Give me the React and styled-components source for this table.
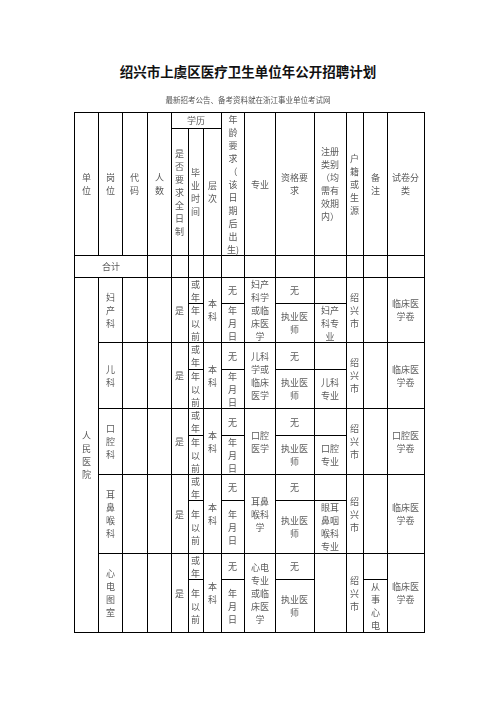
import React from "react";
import styled, { createGlobalStyle } from "styled-components";

const Global = createGlobalStyle`
  html, body { margin: 0; padding: 0; background: #fff; }
  body { font-family: "Liberation Serif", "Noto Sans CJK SC", serif; }
`;

const Page = styled.div`
  width: 496px;
  height: 702px;
  background: #fff;
  padding-top: 63px;
  box-sizing: border-box;
  overflow: hidden;
`;

const Title = styled.h1`
  margin: 0;
  text-align: center;
  font-family: "Noto Sans CJK SC", sans-serif;
  font-weight: 700;
  font-size: 13.5px;
  line-height: 16px;
  color: #111;
`;

const Subtitle = styled.div`
  margin-top: 16px;
  text-align: center;
  font-family: "Noto Sans CJK SC", sans-serif;
  font-size: 7.5px;
  line-height: 10px;
  color: #555;
  will-change: transform;
`;

const Sheet = styled.div`
  margin: 7px 0 0 74px;
  display: grid;
  grid-template-columns: 24px 24px 25px 24px 17px 15px 18px 23px 31px 39px 32px 17px 24px 37px;
  grid-template-rows: 16px 127px 22px 26px 39px 27px 39px 27px 39px 26px 53px 26px 53px;
  width: max-content;
  border-top: 1px solid #000;
  border-left: 1px solid #000;
`;

const Cell = styled.div`
  grid-column: ${(p) => p.$c} / span ${(p) => p.$cs || 1};
  grid-row: ${(p) => p.$r} / span ${(p) => p.$rs || 1};
  border-right: 1px solid #000;
  border-bottom: 1px solid #000;
  box-sizing: border-box;
  display: flex;
  align-items: center;
  justify-content: center;
  text-align: center;
  font-family: "Noto Sans CJK SC", sans-serif;
  font-size: 9px;
  line-height: 13px;
  color: #5a5a5a;
  white-space: nowrap;
  overflow: hidden;
`;

const Text = styled.span`
  display: block;
  will-change: transform;
`;

const Lines = ({ t }) => {
  if (!t) return null;
  const parts = t.split("|");
  return (
    <Text>
      {parts.map((p, i) => (
        <React.Fragment key={i}>
          {i > 0 && <br />}
          {p}
        </React.Fragment>
      ))}
    </Text>
  );
};

const C = ({ c, cs, r, rs, t }) => (
  <Cell $c={c} $cs={cs} $r={r} $rs={rs}>
    <Lines t={t} />
  </Cell>
);

const depts = [
  { post: "妇|产|科", major: "妇产|科学|或临|床医|学", reg: "妇产|科专|业", exam: "临床医|学卷" },
  { post: "儿|科", major: "儿科|学或|临床|医学", reg: "儿科|专业", exam: "临床医|学卷" },
  { post: "口|腔|科", major: "口腔|医学", reg: "口腔|专业", exam: "口腔医|学卷" },
  { post: "耳|鼻|喉|科", major: "耳鼻|喉科|学", reg: "眼耳|鼻咽|喉科|专业", exam: "临床医|学卷" },
  { post: "心|电|图|室", major: "心电|专业|或临|床医|学", reg: null, note: "从|事|心|电", exam: "临床医|学卷" },
];

export default function App() {
  return (
    <Page>
      <Global />
      <Title>绍兴市上虞区医疗卫生单位年公开招聘计划</Title>
      <Subtitle>最新招考公告、备考资料就在浙江事业单位考试网</Subtitle>
      <Sheet>
        <C c={1} r={1} rs={2} t="单|位" />
        <C c={2} r={1} rs={2} t="岗|位" />
        <C c={3} r={1} rs={2} t="代|码" />
        <C c={4} r={1} rs={2} t="人|数" />
        <C c={5} cs={3} r={1} t="学历" />
        <C c={5} r={2} t="是|否|要|求|全|日|制" />
        <C c={6} r={2} t="毕|业|时|间" />
        <C c={7} r={2} t="层|次" />
        <C c={8} r={1} rs={2} t="年|龄|要|求|（|该|日|期|后|出|生)" />
        <C c={9} r={1} rs={2} t="专业" />
        <C c={10} r={1} rs={2} t="资格要|求" />
        <C c={11} r={1} rs={2} t="注册|类别|（均|需有|效期|内）" />
        <C c={12} r={1} rs={2} t="户|籍|或|生|源" />
        <C c={13} r={1} rs={2} t="备|注" />
        <C c={14} r={1} rs={2} t="试卷分|类" />

        <C c={1} cs={3} r={3} t="合计" />
        {[4, 5, 6, 7, 8, 9, 10, 11, 12, 13, 14].map((c) => (
          <C key={c} c={c} r={3} />
        ))}

        <C c={1} r={4} rs={10} t="人|民|医|院" />
        {depts.map((d, i) => {
          const a = 4 + i * 2;
          const b = a + 1;
          return (
            <React.Fragment key={i}>
              <C c={2} r={a} rs={2} t={d.post} />
              <C c={3} r={a} rs={2} />
              <C c={4} r={a} rs={2} />
              <C c={5} r={a} rs={2} t="是" />
              <C c={6} r={a} t="或|年" />
              <C c={6} r={b} t="年|以|前" />
              <C c={7} r={a} rs={2} t="本|科" />
              <C c={8} r={a} t="无" />
              <C c={8} r={b} t="年|月|日" />
              <C c={9} r={a} rs={2} t={d.major} />
              <C c={10} r={a} t="无" />
              <C c={10} r={b} t="执业医|师" />
              {d.reg ? (
                <>
                  <C c={11} r={a} />
                  <C c={11} r={b} t={d.reg} />
                </>
              ) : (
                <C c={11} r={a} rs={2} />
              )}
              <C c={12} r={a} rs={2} t="绍|兴|市" />
              {d.note ? (
                <>
                  <C c={13} r={a} />
                  <C c={13} r={b} t={d.note} />
                </>
              ) : (
                <C c={13} r={a} rs={2} />
              )}
              <C c={14} r={a} rs={2} t={d.exam} />
            </React.Fragment>
          );
        })}
      </Sheet>
    </Page>
  );
}
